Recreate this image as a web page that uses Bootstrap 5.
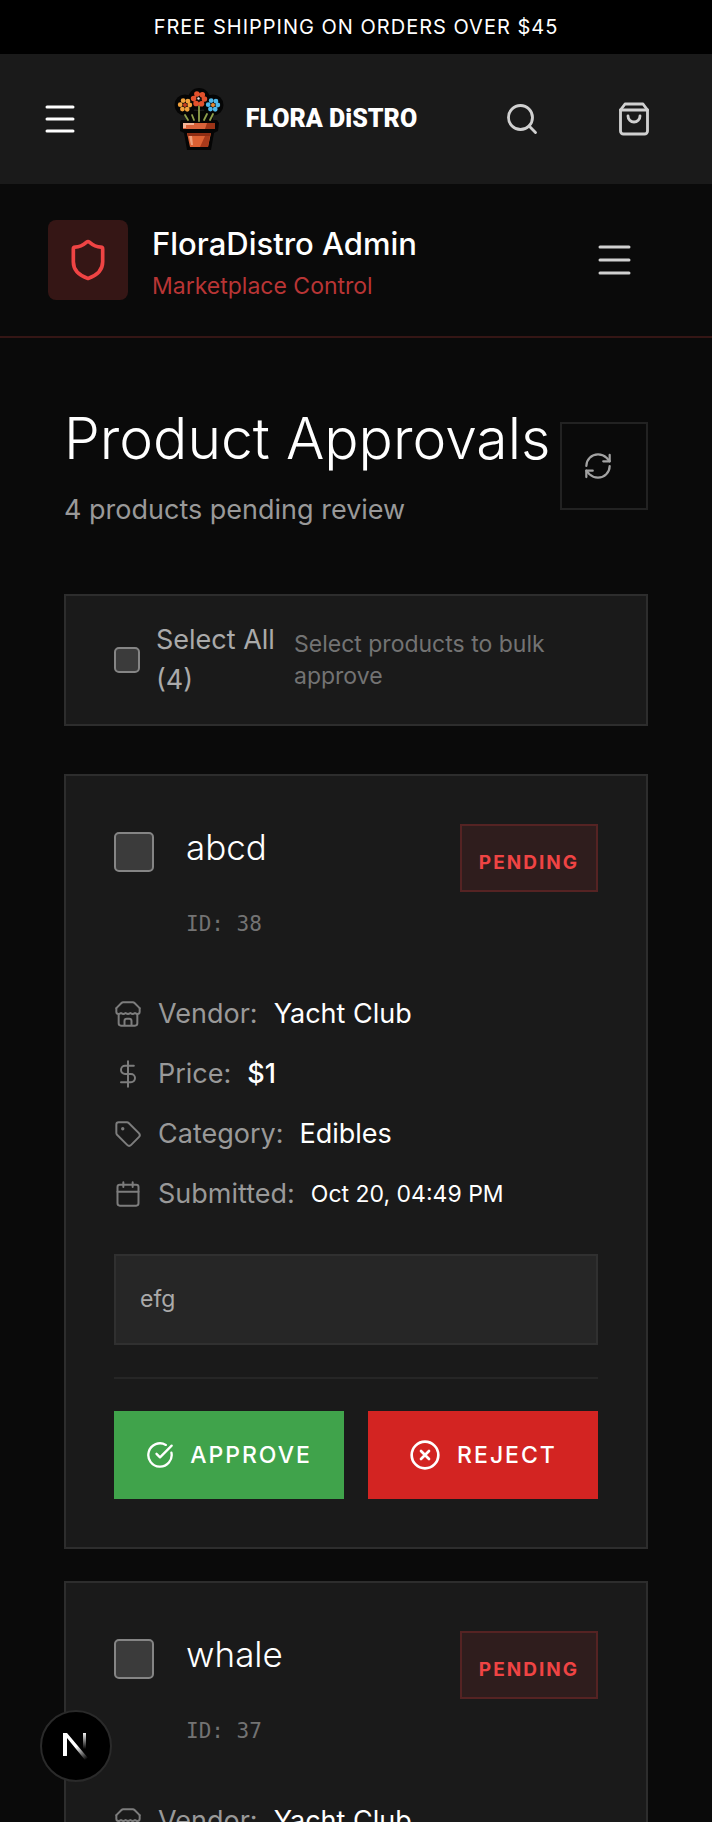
<!DOCTYPE html>
<html lang="en">
<head>
<meta charset="utf-8">
<meta name="viewport" content="width=device-width, initial-scale=1">
<title>Product Approvals</title>
<link href="https://cdn.jsdelivr.net/npm/bootstrap@5.3.0/dist/css/bootstrap.min.css" rel="stylesheet">
<style>
  body { background: #0a0a0a; color: #fff; font-family: Inter, "Liberation Sans", sans-serif; font-size: 27px; line-height: 40px; }
  svg { display: block; flex: none; fill: none; stroke: currentColor; stroke-linecap: round; stroke-linejoin: round; }
  svg.art { stroke: none; }
  .plain-btn { background: none; border: 0; padding: 0; color: #d0d0d0; }
  .promo { background: #000; font-size: 20px; line-height: 54px; letter-spacing: 1px; }
  .site-head { background: #1a1a1a; height: 130px; padding: 0 60px 0 45px; }
  .brand-link { color: #fff; gap: 22px; margin-left: 12px; }
  .brand-link:hover { color: #fff; }
  .brand-word { font: 900 25px/40px Roboto, "Liberation Sans", sans-serif; }
  .head-tools { gap: 76px; }
  .admin-head { padding: 34px 80px 34px 48px; border-bottom: 2px solid #351615; }
  .shield-tile { width: 80px; height: 80px; border-radius: 8px; background: #351615; color: #ef4444; }
  .admin-name { font-size: 31px; line-height: 52px; font-weight: 500; }
  .admin-sub { font-size: 23px; line-height: 32px; color: #b83535; }
  main { padding: 64px; }
  h1 { font-size: 57px; line-height: 74px; font-weight: 300; margin-bottom: 14px; }
  .muted { color: #999; }
  .refresh { width: 88px; height: 88px; border: 2px solid #222; padding-left: 22px; color: #a3a3a3; }
  .panel { background: #1a1a1a; border: 2px solid #2d2d2d; padding: 48px; }
  .select-bar { margin-top: 64px; padding-top: 24px; padding-bottom: 24px; }
  .tick { appearance: none; flex: none; width: 40px; height: 40px; margin: 0; background: #3b3b3b; border: 2px solid #858585; border-radius: 5px; }
  .tick-sm { width: 26px; height: 26px; }
  .all-label { flex: none; width: 126px; margin: 0 12px 0 16px; color: #aaa; }
  .hint { font-size: 23px; line-height: 32px; color: #737373; }
  .item-head { margin-left: 32px; margin-bottom: 52px; }
  h2 { font-size: 35px; line-height: 46px; font-weight: 300; margin-bottom: 36px; }
  .item-id { font: 21px/36px "DejaVu Sans Mono", monospace; color: #737373; }
  .pending { border: 2px solid #552323; background: #2f1d1d; color: #ef4444; font-size: 19px; line-height: 30px; font-weight: 700; letter-spacing: 2px; padding: 22px 17px 12px; }
  .facts { gap: 20px; }
  .facts dt { font-weight: 400; color: #999; }
  .facts svg { color: #7d7d7d; }
  .price { font-weight: 500; }
  .small-value { font-size: 23px; }
  .descr { background: #262626; border: 2px solid #303030; margin-top: 40px; padding: 24px; font-size: 23px; line-height: 39px; color: #aaa; }
  .actions { border-top: 2px solid #262626; margin-top: 32px; padding-top: 32px; gap: 24px; }
  .act { flex: 1 1 0; border: 0; height: 88px; color: #fff; font-size: 23px; font-weight: 500; letter-spacing: 2px; }
  .act-yes { background: #40a34b; }
  .act-no { background: #d32422; }
  .next-item { margin-top: 32px; }
  .dev-badge { position: fixed; left: 40px; bottom: 40px; width: 72px; height: 72px; border-radius: 50%; background: #000; border: 2px solid #2a2a2a; }
</style>
</head>
<body>
<div class="vh-100 overflow-hidden">
  <div class="promo text-center">FREE SHIPPING ON ORDERS OVER $45</div>

  <header class="site-head d-flex align-items-center justify-content-between">
    <button class="plain-btn text-white" aria-label="Menu">
      <svg width="30" height="28" viewBox="0 0 30 28" stroke-width="3"><path d="M2 2h26M2 14h26M2 26h26"/></svg>
    </button>
    <a href="#" class="brand-link d-flex align-items-center text-decoration-none">
      <svg class="art" width="50" height="64" viewBox="0 0 50 64">
        <g fill="#050505"><circle cx="25" cy="12" r="11"/><circle cx="11" cy="18" r="10.500"/><circle cx="39" cy="18" r="10.500"/><path d="M12 24h27v12H12zM7 33h36l2 3-1 8-4 2-3 17H13L10 46l-4-2V35z"/></g>
        <path d="M14 33l-3-5M25 34V19M36 33l3-6M20 33l-2-5M30 33l3-6" stroke="#8fa04c" stroke-width="1.800"/>
        <g stroke-linecap="round">
          <g stroke-width="4.800" stroke-dasharray="0 5.030"><circle cx="11" cy="18" r="4.800" stroke="#f3a23c"/><circle cx="39" cy="18" r="4.800" stroke="#4fb8ea"/></g>
          <circle cx="25" cy="12" r="5.400" stroke="#e4512c" stroke-width="5.600" stroke-dasharray="0 5.655"/>
        </g>
        <circle cx="11" cy="18" r="2" fill="#c8401f"/><circle cx="25" cy="12" r="2.200" fill="#1c1414"/><circle cx="24.500" cy="11.500" r="1.200" fill="#e8e4e4"/><circle cx="39" cy="18" r="2" fill="#e98a32"/>
        <path d="M9 36h32v6H9z" fill="#d9623a"/><path d="M9 36h11v2H12v3H9z" fill="#f3b395"/><path d="M33 36h8v6h-10z" fill="#9c3417"/>
        <path d="M13 46h24l-3 14H16z" fill="#dd6133"/><path d="M13 46h24l-1 3H14z" fill="#8e2d14"/><path d="M31 49h5l-2 11h-8z" fill="#a83a1b"/><path d="M15 49h3l1 9h-2z" fill="#f0a07c"/>
      </svg>
      <span class="brand-word">FLORA DiSTRO</span>
    </a>
    <div class="head-tools d-flex">
      <button class="plain-btn" aria-label="Search"><svg width="36" height="36" viewBox="0 0 24 24" stroke-width="1.9"><circle cx="11" cy="11" r="8"/><path d="m21 21-4.3-4.3"/></svg></button>
      <button class="plain-btn" aria-label="Cart"><svg width="36" height="36" viewBox="0 0 24 24" stroke-width="1.9"><path d="M6 2 3 6v14a2 2 0 0 0 2 2h14a2 2 0 0 0 2-2V6l-3-4Z"/><path d="M3 6h18M16 10a4 4 0 0 1-8 0"/></svg></button>
    </div>
  </header>

  <section class="admin-head d-flex align-items-center">
    <div class="shield-tile d-flex align-items-center justify-content-center me-4">
      <svg width="44" height="44" viewBox="0 0 24 24" stroke-width="2"><path d="M20 13c0 5-3.500 7.500-7.660 8.950a1 1 0 0 1-.67-.01C7.500 20.500 4 18 4 13V6a1 1 0 0 1 1-1c2 0 4.500-1.200 6.240-2.720a1.170 1.170 0 0 1 1.520 0C14.510 3.810 17 5 19 5a1 1 0 0 1 1 1z"/></svg>
    </div>
    <div class="flex-grow-1">
      <div class="admin-name">FloraDistro Admin</div>
      <div class="admin-sub">Marketplace Control</div>
    </div>
    <button class="plain-btn" aria-label="Admin menu">
      <svg width="35" height="30" viewBox="0 0 35 30" stroke-width="3"><path d="M3 2h29M3 15h29M3 28h29"/></svg>
    </button>
  </section>

  <main>
    <div class="d-flex align-items-center justify-content-between">
      <div>
        <h1 class="text-nowrap">Product Approvals</h1>
        <p class="muted mb-0">4 products pending review</p>
      </div>
      <button class="plain-btn refresh flex-shrink-0" aria-label="Refresh">
        <svg width="28" height="28" viewBox="0 0 24 24" stroke-width="1.9"><path d="M2 12a10 10 0 0 1 10-10 10.500 10.500 0 0 1 7.300 2.900L22 8"/><path d="M22 2.500V8h-5.500M22 12a10 10 0 0 1-10 10 10.500 10.500 0 0 1-7.300-2.900L2 16"/><path d="M7.500 16H2v5.500"/></svg>
      </button>
    </div>

    <div class="panel select-bar d-flex align-items-center">
      <input type="checkbox" class="tick tick-sm" id="pick-all">
      <label class="all-label" for="pick-all">Select All (4)</label>
      <span class="hint">Select products to bulk approve</span>
    </div>

    <article class="panel mt-5">
      <div class="d-flex align-items-start">
        <input type="checkbox" class="tick mt-2" id="pick-38">
        <div class="flex-grow-1 item-head">
          <h2><label for="pick-38">abcd</label></h2>
          <div class="item-id">ID: 38</div>
        </div>
        <span class="pending">PENDING</span>
      </div>
      <dl class="facts d-flex flex-column mb-0">
        <div class="d-flex align-items-center gap-3">
          <svg width="28" height="28" viewBox="0 0 24 24" stroke-width="1.7"><path d="m2 7 4.410-4.410A2 2 0 0 1 7.830 2h8.340a2 2 0 0 1 1.420.59L22 7"/><path d="M4 12v8a2 2 0 0 0 2 2h12a2 2 0 0 0 2-2v-8M15 22v-4a2 2 0 0 0-2-2h-2a2 2 0 0 0-2 2v4"/><path d="M22 7v3a2 2 0 0 1-2 2 2.700 2.700 0 0 1-1.590-.63.7.7 0 0 0-.82 0A2.700 2.700 0 0 1 16 12a2.700 2.700 0 0 1-1.590-.63.7.7 0 0 0-.82 0A2.700 2.700 0 0 1 12 12a2.700 2.700 0 0 1-1.590-.63.7.7 0 0 0-.82 0A2.700 2.700 0 0 1 8 12a2.700 2.700 0 0 1-1.590-.63.7.7 0 0 0-.82 0A2.700 2.700 0 0 1 4 12a2 2 0 0 1-2-2V7"/></svg>
          <dt>Vendor:</dt><dd class="mb-0">Yacht Club</dd>
        </div>
        <div class="d-flex align-items-center gap-3">
          <svg width="28" height="28" viewBox="0 0 24 24" stroke-width="1.7"><path d="M12 1v22M17 5H9.500a3.500 3.500 0 0 0 0 7h5a3.500 3.500 0 0 1 0 7H6"/></svg>
          <dt>Price:</dt><dd class="mb-0 price">$1</dd>
        </div>
        <div class="d-flex align-items-center gap-3">
          <svg width="28" height="28" viewBox="0 0 24 24" stroke-width="1.7"><path d="M12.590 2.590A2 2 0 0 0 11.170 2H4a2 2 0 0 0-2 2v7.170a2 2 0 0 0 .59 1.420l8.700 8.700a2.430 2.430 0 0 0 3.420 0l6.580-6.580a2.430 2.430 0 0 0 0-3.420z"/><circle cx="7.500" cy="7.500" r=".6" fill="currentColor"/></svg>
          <dt>Category:</dt><dd class="mb-0">Edibles</dd>
        </div>
        <div class="d-flex align-items-center gap-3">
          <svg width="28" height="28" viewBox="0 0 24 24" stroke-width="1.7"><path d="M8 2v4M16 2v4M3 10h18"/><rect x="3" y="4" width="18" height="18" rx="2"/></svg>
          <dt>Submitted:</dt><dd class="mb-0 small-value">Oct 20, 04:49 PM</dd>
        </div>
      </dl>
      <div class="descr">efg</div>
      <div class="actions d-flex">
        <button class="act act-yes d-flex align-items-center justify-content-center gap-3"><svg width="28" height="28" viewBox="0 0 24 24" stroke-width="2"><path d="M21.800 10A10 10 0 1 1 17 3.340"/><path d="m9 11 3 3L22 4"/></svg>APPROVE</button>
        <button class="act act-no d-flex align-items-center justify-content-center gap-3"><svg width="32" height="32" viewBox="0 0 24 24" stroke-width="2"><circle cx="12" cy="12" r="10"/><path d="m15 9-6 6M9 9l6 6"/></svg>REJECT</button>
      </div>
    </article>

    <article class="panel next-item">
      <div class="d-flex align-items-start">
        <input type="checkbox" class="tick mt-2" id="pick-37">
        <div class="flex-grow-1 item-head">
          <h2><label for="pick-37">whale</label></h2>
          <div class="item-id">ID: 37</div>
        </div>
        <span class="pending">PENDING</span>
      </div>
      <dl class="facts d-flex flex-column mb-0">
        <div class="d-flex align-items-center gap-3">
          <svg width="28" height="28" viewBox="0 0 24 24" stroke-width="1.7"><path d="m2 7 4.410-4.410A2 2 0 0 1 7.830 2h8.340a2 2 0 0 1 1.420.59L22 7"/><path d="M4 12v8a2 2 0 0 0 2 2h12a2 2 0 0 0 2-2v-8M15 22v-4a2 2 0 0 0-2-2h-2a2 2 0 0 0-2 2v4"/><path d="M22 7v3a2 2 0 0 1-2 2 2.700 2.700 0 0 1-1.590-.63.7.7 0 0 0-.82 0A2.700 2.700 0 0 1 16 12a2.700 2.700 0 0 1-1.590-.63.7.7 0 0 0-.82 0A2.700 2.700 0 0 1 12 12a2.700 2.700 0 0 1-1.590-.63.7.7 0 0 0-.82 0A2.700 2.700 0 0 1 8 12a2.700 2.700 0 0 1-1.590-.63.7.7 0 0 0-.82 0A2.700 2.700 0 0 1 4 12a2 2 0 0 1-2-2V7"/></svg>
          <dt>Vendor:</dt><dd class="mb-0">Yacht Club</dd>
        </div>
      </dl>
    </article>
  </main>
</div>

<button class="dev-badge d-flex align-items-center justify-content-center p-0" aria-label="Next.js developer tools">
  <svg class="art" width="26" height="28" viewBox="0 0 26 28">
    <defs>
      <linearGradient id="fade-diag" x1="14" y1="14" x2="24" y2="27" gradientUnits="userSpaceOnUse"><stop stop-color="#fff"/><stop offset="1" stop-color="#fff" stop-opacity="0"/></linearGradient>
      <linearGradient id="fade-stem" x1="0" y1="0" x2="0" y2="17" gradientUnits="userSpaceOnUse"><stop stop-color="#fff"/><stop offset="1" stop-color="#fff" stop-opacity="0"/></linearGradient>
    </defs>
    <path d="M0 1h4l21 25-3 2L4 6v18H0z" fill="url(#fade-diag)"/>
    <path d="M20 1h3v17h-3z" fill="url(#fade-stem)"/>
  </svg>
</button>
<script src="https://cdn.jsdelivr.net/npm/bootstrap@5.3.0/dist/js/bootstrap.bundle.min.js"></script>
</body>
</html>
